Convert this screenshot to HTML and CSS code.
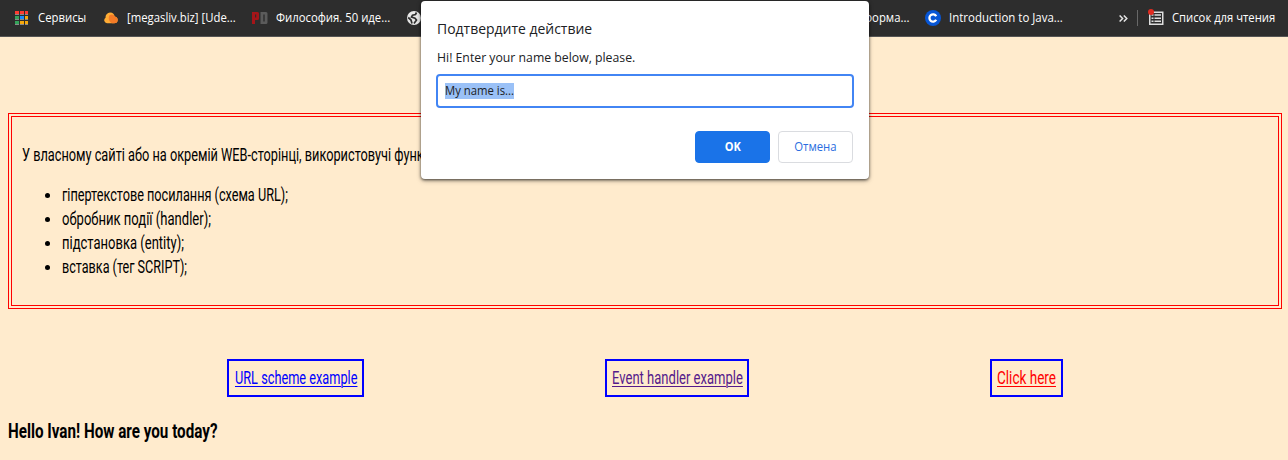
FILE: index.html
```
<!DOCTYPE html>
<html lang="uk">
<head>
<meta charset="utf-8">
<title>JavaScript</title>
<link rel="stylesheet" href="styles.css">
</head>
<body>
<header class="bookmarks">
  <div class="mark mark-apps">
    <svg class="icon" width="14" height="14" viewBox="0 0 14 14" shape-rendering="crispEdges">
      <path fill="#ff3b30" d="M0 0h4v3H0zM5 0h4v3H5zM10 0h3v3h-3z"/>
      <path fill="#34a35a" d="M0 5h4v3H0zM0 10h4v3H0z"/>
      <path fill="#1a8cff" d="M5 5h4v3H5z"/>
      <path fill="#f5a80c" d="M10 5h3v3h-3zM5 10h4v3H5zM10 10h3v3h-3z"/>
      <path fill="#8a8a8a" d="M0 3h4v1H0zM5 3h4v1H5zM10 3h3v1h-3zM0 8h4v1H0zM5 8h4v1H5zM10 8h3v1h-3zM0 13h4v1H0zM5 13h4v1H5zM10 13h3v1h-3z"/>
    </svg>
    <span class="ui">Сервисы</span>
  </div>
  <div class="mark mark-cloud">
    <svg class="icon" width="14" height="12" viewBox="0 0 14 12">
      <path fill="#ffac35" d="M3 11.3A3 3 0 0 1 1.6 5.8 4.6 4.6 0 0 1 6 .5c3 0 4.4 2 4.7 4 2 .2 3 1.800 3 3.500a3.500 3.500 0 0 1-3.500 3.300z"/>
      <path fill="#f47b27" d="M5.500 3.300a4 4 0 0 1 5.400 1.300c1.900.3 2.800 1.800 2.800 3.400a3.500 3.500 0 0 1-3.500 3.300H8c-3.200-1.500-4-5-2.500-8z"/>
    </svg>
    <span class="ui">[megasliv.biz] [Ude...</span>
  </div>
  <div class="mark mark-pd">
    <svg class="icon" width="16" height="14" viewBox="0 0 16 14">
      <path fill="#a51519" fill-rule="evenodd" d="M0 1h5.500q1.500 0 1.500 1.500v5Q7 9 5.500 9H3v4H0zM3 3.500v3h1.200v-3z"/>
      <path fill="#5b5b5b" fill-rule="evenodd" d="M8.500 1H14q1.500 0 1.500 1.500v9Q15.500 13 14 13H8.500zM11.300 3.500v7h1.400v-7z"/>
    </svg>
    <span class="ui">Философия. 50 иде...</span>
  </div>
  <div class="mark mark-globe">
    <svg class="icon" width="14" height="14" viewBox="0 0 14 14">
      <circle cx="7" cy="7" r="7" fill="#e8e8e8"/>
      <path fill="none" stroke="#2d2d2d" stroke-width="1.700" d="M9.500 1.500 8.500 3.500 5.500 4.200 4.500 6 8 7.200 9.500 9 7 12.500M1.200 6.500 4 9 5 12.500"/>
    </svg>
  </div>
  <div class="mark mark-info"><span class="ui">форма...</span></div>
  <div class="mark mark-course">
    <svg class="icon" width="16" height="16" viewBox="0 0 16 16">
      <circle cx="8" cy="8" r="8" fill="#0756d6"/>
      <path fill="none" stroke="#fff" stroke-width="2.300" d="M11.200 9.700A3.600 3.600 0 1 1 11.200 6.300"/>
    </svg>
    <span class="ui">Introduction to Java...</span>
  </div>
  <div class="mark mark-more">
    <svg class="icon" width="9" height="7" viewBox="0 0 9 7"><path fill="none" stroke="#e4e4e4" stroke-width="1.500" d="M.6.5 3.600 3.500.6 6.500M4.800.5 7.800 3.500 4.800 6.500"/></svg>
  </div>
  <div class="divider"></div>
  <div class="mark mark-reading">
    <svg class="icon" width="16" height="17" viewBox="0 0 16 17">
      <path fill="none" stroke="#dedede" stroke-width="1.500" d="M1.750 3.250h13v12h-13z"/>
      <path fill="#dedede" d="M3.500 5.200h2v1.500h-2zM6.500 5.200h6.500v1.500H6.500zM3.500 8.400h2v1.500h-2zM6.500 8.400h6.500v1.500H6.500zM3.500 11.600h2v1.500h-2zM6.500 11.600h6.500v1.500H6.500z"/>
      <circle cx="3" cy="3" r="3" fill="#e02b20"/>
    </svg>
    <span class="ui">Список для чтения</span>
  </div>
</header>

<main class="page">
  <section class="task">
    <p class="line"><span class="slim lead">У власному сайті або на окремій WEB-сторінці, використовучі функ</span></p>
    <ul class="list">
      <li><span class="slim item-a">гіпертекстове посилання (схема URL);</span></li>
      <li><span class="slim item-b">обробник події (handler);</span></li>
      <li><span class="slim item-c">підстановка (entity);</span></li>
      <li><span class="slim item-d">вставка (тег SCRIPT);</span></li>
    </ul>
  </section>
  <nav class="links">
    <div class="link link-url"><a class="slim">URL scheme example</a></div>
    <div class="link link-event"><a class="slim">Event handler example</a></div>
    <div class="link link-click"><a class="slim">Click here</a></div>
  </nav>
  <h3 class="hello"><span class="slim">Hello Ivan! How are you today?</span></h3>
</main>

<div class="dialog">
  <div class="title"><span class="ui">Подтвердите действие</span></div>
  <div class="message"><span class="ui">Hi! Enter your name below, please.</span></div>
  <div class="field"><span class="selected"><span class="ui">My name is...</span></span></div>
  <div class="actions">
    <div class="button ok"><span class="ui">OK</span></div>
    <div class="button cancel"><span class="ui">Отмена</span></div>
  </div>
</div>
</body>
</html>
```
FILE: styles.css
```
* { box-sizing: border-box; }
body {
  margin: 0;
  height: 460px;
  overflow: hidden;
  background: #ffebcd;
  color: #000;
  font: 18px/24px Roboto, sans-serif;
}
.ui, .slim {
  display: inline-block;
  white-space: nowrap;
  transform-origin: 0 50%;
}
.ui { transform: scaleX(.944); }
.slim { transform: scaleX(.708); }

.bookmarks {
  display: flex;
  align-items: center;
  height: 37px;
  padding-left: 15px;
  border-bottom: 1px solid #555;
  background: #2d2d2d;
  color: #fff;
  font: 12px/16px "Open Sans", sans-serif;
}
.mark { display: flex; align-items: center; flex: none; }
.icon { flex: none; display: block; }
.mark-apps { width: 89px; gap: 9px; }
.mark-cloud { width: 148px; gap: 9px; }
.mark-pd { width: 155px; gap: 8px; }
.mark-globe { width: 457px; }
.mark-info { width: 61px; }
.mark-course { width: 194px; gap: 8px; }
.mark-course .ui { transform: scaleX(.955); }
.mark-more { width: 18px; }
.divider { flex: none; width: 1px; height: 16px; background: #686868; }
.mark-reading { margin-left: 10px; gap: 8px; }
.mark-reading .icon { margin-top: -2px; }
.mark-reading .ui { transform: scaleX(.938); }

.page { padding: 76px 6px 0 8px; }
.task {
  height: 196px;
  padding: 10px;
  border: 4px double #f00;
}
.line { margin: 16px 0; height: 24px; }
.list { margin: 16px 0; padding-left: 40px; font-size: 16px; }
.list li { height: 24px; }
.list .slim { font-size: 18px; }
.list .item-a { transform: scaleX(.705); }
.list .item-b { transform: scaleX(.725); }
.list .item-c { transform: scaleX(.723); }
.list .item-d { transform: scaleX(.7); }

.links {
  display: flex;
  margin-top: 50px;
  padding-left: 219px;
}
.link {
  flex: none;
  height: 38px;
  padding: 5px;
  border: 2px solid #00f;
}
.link a {
  text-decoration: underline;
  text-decoration-thickness: 1px;
  text-underline-offset: 2px;
}
.link-url { width: 137px; margin-right: 241px; padding-left: 6px; color: #00f; }
.link-event { width: 144px; margin-right: 241px; color: #551a8b; }
.link-event a { transform: scaleX(.724); }
.link-click { width: 73px; color: #f00; }
.link-click a { transform: scaleX(.752); }
.hello {
  margin: 22px 0 0;
  font-size: 20px;
  line-height: 24px;
}
.hello .slim { transform: scaleX(.76); }

.dialog {
  position: absolute;
  left: 421px;
  top: 1px;
  width: 448px;
  height: 178px;
  padding: 16px 15px;
  border-radius: 4px;
  background: #fff;
  box-shadow: 0 1px 3px rgba(0, 0, 0, .65), 0 2px 5px rgba(0, 0, 0, .25);
  color: #202124;
  font: 12px/16px "Open Sans", sans-serif;
}
.title { height: 24px; padding-left: 1px; font-size: 15px; line-height: 23px; }
.title .ui { transform: scaleX(.93); }
.message { height: 33px; padding-left: 1px; font-size: 13px; line-height: 33px; }
.message .ui { transform: scaleX(.943); }
.field {
  display: flex;
  align-items: center;
  height: 34px;
  padding-left: 7px;
  border: 2px solid #4285f4;
  border-radius: 4px;
}
.selected { width: 69px; height: 16px; background: #9ac1f7; }
.actions {
  display: flex;
  justify-content: flex-end;
  gap: 8px;
  margin-top: 23px;
  padding-right: 1px;
}
.button {
  display: flex;
  align-items: center;
  justify-content: center;
  width: 75px;
  height: 32px;
  border: 1px solid #dadce0;
  border-radius: 4px;
  color: #2a6de0;
}
.button .ui { transform-origin: 50% 50%; }
.ok { border-color: #1a73e8; background: #1a73e8; color: #fff; font-weight: 700; }
.ok .ui { transform: scaleX(.92); }
```
